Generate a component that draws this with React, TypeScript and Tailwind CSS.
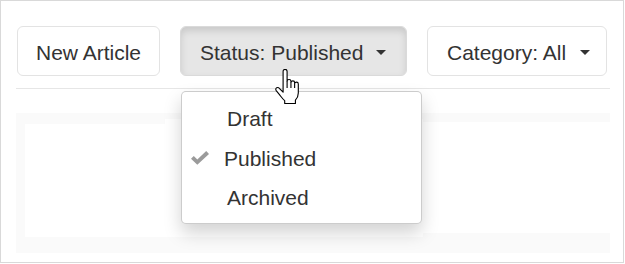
import { useState } from 'react';

const items = ['Draft', 'Published', 'Archived'];

function Caret() {
    return (
        <svg width="10" height="5" viewBox="0 0 10 5" className="shrink-0">
            <polygon points="0,0 10,0 5,5" fill="#333" />
        </svg>
    );
}

function CheckIcon() {
    return (
        <svg width="18" height="14" viewBox="0 0 18 14">
            <polygon points="0,7.8 2.8,5 6.3,8.4 15.2,0 18,2.9 6.3,13.8" fill="#9b9b9b" />
        </svg>
    );
}

function HandCursor() {
    return (
        <svg width="27" height="36" viewBox="0 0 16.5 22.5" className="absolute left-[94px] top-[43px]">
            <path
                d="M5.5 1.5C5.5 0.7 6.1 0.2 6.8 0.2C7.5 0.2 8 0.7 8 1.5L8 7.6C8 7 8.5 6.6 9.2 6.6C9.9 6.6 10.4 7.1 10.4 7.7L10.4 8.3C10.5 7.8 11 7.4 11.6 7.4C12.2 7.4 12.7 7.9 12.7 8.5L12.7 9C12.8 8.5 13.3 8.2 13.9 8.2C14.5 8.2 15 8.7 15 9.3L15 15C15 17 14.2 18.4 13.2 19.4L13.2 21.6L6.5 21.6L6.5 19.8C5.5 19 4.6 17.8 3.6 16.5L1.2 13.5C0.7 12.8 0.9 12 1.5 11.7C2.1 11.4 2.8 11.6 3.3 12.2L5.5 14.5Z"
                fill="#fff"
                stroke="#000"
                strokeWidth="0.7"
                strokeLinejoin="round"
            />
            <path d="M8 7.6L8 11.8M10.4 8.3L10.4 11.8M12.7 9L12.7 11.8" stroke="#000" strokeWidth="0.7" />
        </svg>
    );
}

export default function App() {
    const [status] = useState('Published');

    return (
        <div className="relative w-[624px] h-[263px] border border-[#d9d9d9] bg-white text-[#333] font-['Liberation_Sans',Arial,sans-serif]">
            <div className="pl-[15px] pt-[25px]">
                {/* Toolbar */}
                <div className="flex items-start gap-[20px] pl-[1px]">
                    <button className="w-[143px] h-[50px] pt-[2px] rounded-[6px] border border-[#e3e3e3] bg-white text-[21px] leading-none flex items-center justify-center">
                        New Article
                    </button>

                    <div className="relative">
                        <button className="w-[227px] h-[50px] pt-[2px] rounded-[6px] border border-[#dadada] bg-[#e6e6e6] shadow-[inset_0_4px_7px_rgba(0,0,0,0.125)] text-[21px] leading-none flex items-center pl-[19px]">
                            <span>Status: {status}</span>
                            <span className="ml-[13px]">
                                <Caret />
                            </span>
                        </button>

                        {/* Dropdown menu */}
                        <div className="absolute left-[1px] top-[65px] z-10 w-[241px] h-[133px] rounded-[5px] border border-[rgba(0,0,0,0.2)] bg-white shadow-[0_9px_18px_rgba(0,0,0,0.175)] pt-[7px] text-[21px] leading-none">
                            {items.map((item) => (
                                <div key={item} className="flex items-center h-[39.5px]">
                                    {item === status ? (
                                        <>
                                            <span className="w-[42px] pl-[9px] flex items-center">
                                                <CheckIcon />
                                            </span>
                                            <span>{item}</span>
                                        </>
                                    ) : (
                                        <span className="pl-[45px]">{item}</span>
                                    )}
                                </div>
                            ))}
                        </div>

                        <div className="absolute left-0 top-0 z-20">
                            <HandCursor />
                        </div>
                    </div>

                    <button className="w-[180px] h-[50px] pt-[2px] rounded-[6px] border border-[#e3e3e3] bg-white text-[21px] leading-none flex items-center pl-[19px]">
                        <span>Category: All</span>
                        <span className="ml-[14px]">
                            <Caret />
                        </span>
                    </button>
                </div>

                {/* Separator */}
                <div className="mt-[12px] w-[594px] h-px bg-[#e6e6e6]" />

                {/* Content area */}
                <div className="mt-[24px] w-[594px] h-[140px] bg-[#fafafa] flex items-start">
                    <div className="ml-[9px] mt-[11px] w-[140px] h-[113px] bg-white" />
                    <div className="mt-[6px] w-[258px] h-[118px] bg-white" />
                    <div className="mt-[9px] w-[187px] h-[111px] bg-white" />
                </div>
            </div>
        </div>
    );
}
